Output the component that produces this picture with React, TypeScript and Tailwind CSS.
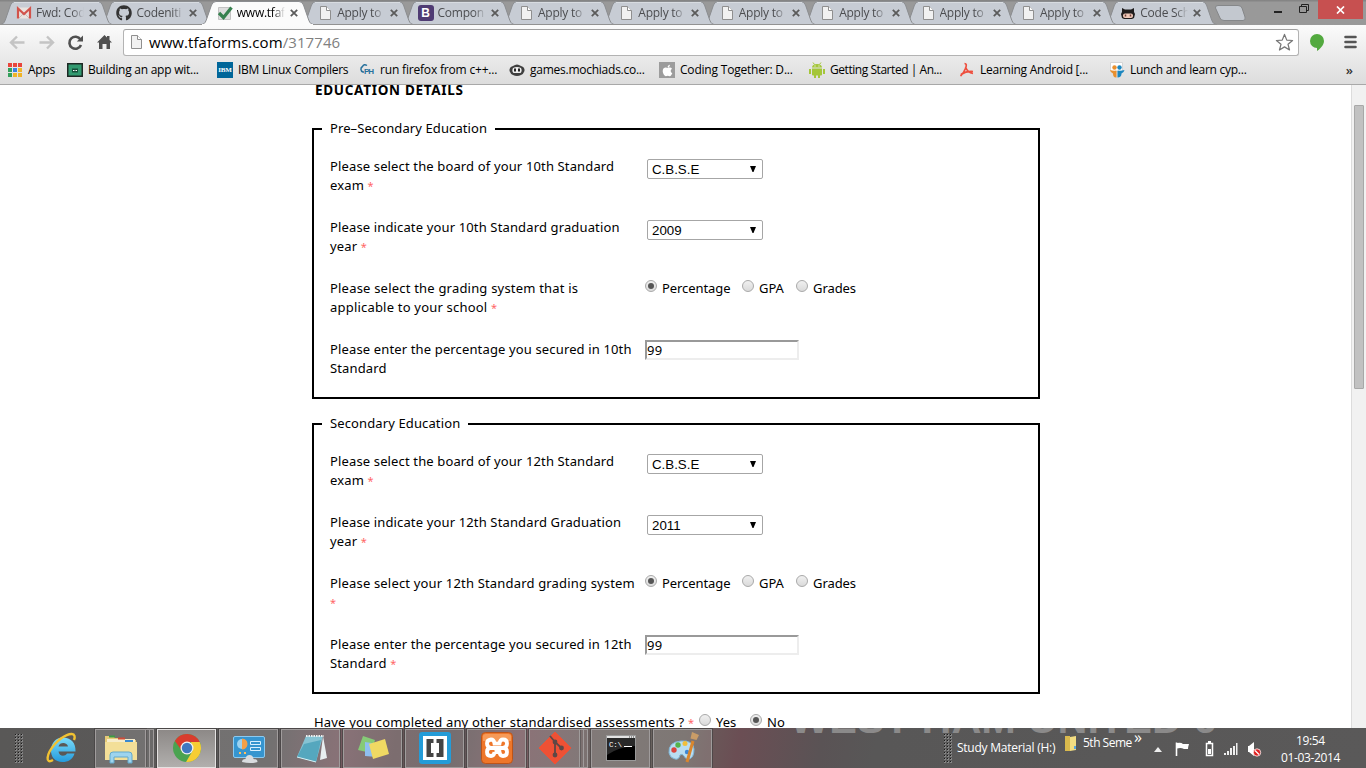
import React from "react";
import { FaGithub, FaApple } from "react-icons/fa";

type TabIcon = "gmail" | "github" | "check" | "page" | "bootstrap" | "octocat";

const tabs: { title: string; icon: TabIcon; active?: boolean }[] = [
  { title: "Fwd: Cod", icon: "gmail" },
  { title: "Codeniti", icon: "github" },
  { title: "www.tfaf", icon: "check", active: true },
  { title: "Apply to", icon: "page" },
  { title: "Compon", icon: "bootstrap" },
  { title: "Apply to", icon: "page" },
  { title: "Apply to", icon: "page" },
  { title: "Apply to", icon: "page" },
  { title: "Apply to", icon: "page" },
  { title: "Apply to", icon: "page" },
  { title: "Apply to", icon: "page" },
  { title: "Code Sch", icon: "octocat" },
];

function PageIcon() {
  return (
    <svg width="16" height="16" viewBox="0 0 16 16" className="shrink-0">
      <path d="M3.500 1.500h6l4 4v9h-10z" fill="#f1f1f1" stroke="#8f8f8f" />
      <path d="M9.500 1.500v4h4" fill="#fff" stroke="#8f8f8f" />
    </svg>
  );
}

function TabGlyph({ icon }: { icon: TabIcon }) {
  switch (icon) {
    case "gmail":
      return (
        <svg width="16" height="16" viewBox="0 0 16 16" className="shrink-0">
          <path d="M1 2.500h14v11H1z" fill="#e9e3df" />
          <path d="M3 13 8 8l5 5" fill="none" stroke="#c9bcb8" />
          <path d="M2 13.500V3.500l6 5.500 6-5.500v10" fill="none" stroke="#d2534b" strokeWidth="2.200" />
        </svg>
      );
    case "github":
      return <FaGithub className="size-4 shrink-0 text-[#333]" />;
    case "check":
      return (
        <svg width="16" height="16" viewBox="0 0 16 16" className="shrink-0">
          <path d="M1.500 2.500h12v12h-12z" fill="#dedede" stroke="#c2c2c2" />
          <path d="M2 8 6.500 12.500 14.500 2.500" fill="none" stroke="#37814f" strokeWidth="3.200" />
        </svg>
      );
    case "bootstrap":
      return (
        <span className="flex size-4 shrink-0 items-center justify-center rounded-[3px] bg-[#4f3b73] font-['Liberation_Sans',sans-serif] text-[12px] leading-none font-bold text-white">
          B
        </span>
      );
    case "octocat":
      return (
        <svg width="16" height="16" viewBox="0 0 16 16" className="shrink-0">
          <path d="M2 3l3 1.500h6L14 3v4l1 2-1 4-2 1H4l-2-1-1-4 1-2z" fill="#1f1c1c" />
          <rect x="3" y="8.500" width="10" height="4.500" rx="2" fill="#f0c9b8" />
          <path d="M5.500 9.500v2M10.500 9.500v2" stroke="#6b3d35" strokeWidth="1.500" />
        </svg>
      );
    default:
      return <PageIcon />;
  }
}

function Tab({ title, icon, active, order }: { title: string; icon: TabIcon; active?: boolean; order: number }) {
  return (
    <div className="relative h-[25px] w-[100.4px] shrink-0" style={{ zIndex: active ? 50 : 30 - order }}>
      <svg width="114" height="25" viewBox="0 0 114 25" className="absolute top-0 left-0">
        <path
          d="M1 24.500C4 24 5 21 6 18L10.500 5Q12 1.500 15 1.500H98Q101 1.500 102.500 5L107 18C108 21 109 24 112 24.500"
          fill={active ? "#fbfbfb" : "#c7ccd4"}
          stroke="#8b8d90"
        />
        {active ? <path d="M1 24.500H112" stroke="#fbfbfb" /> : <path d="M0 24.500H113" stroke="#929292" />}
        {!active && <path d="M14 2.500H99" stroke="#d8dce1" />}
      </svg>
      <div className="relative flex h-[25px] w-[102px] items-center pl-4">
        <TabGlyph icon={icon} />
        <span
          className={`ml-1 w-[48px] overflow-hidden [mask-image:linear-gradient(to_right,#000_75%,transparent)] whitespace-nowrap text-[12px] tracking-[-0.25px] ${
            active ? "text-black" : "text-[#4c4d50]"
          }`}
        >
          {title}
        </span>
        <svg width="8" height="8" viewBox="0 0 8 8" className="ml-[5px] shrink-0">
          <path d="M.8.8l6.400 6.400M7.200.8.8 7.200" stroke="#5b5b5b" strokeWidth="1.800" />
        </svg>
      </div>
    </div>
  );
}

function TabStrip() {
  return (
    <div className="flex h-[25px] bg-linear-to-b from-[#858585] from-[4%] to-[#999] to-[8%]">
      {tabs.map((t, i) => (
        <Tab key={i} order={i} {...t} />
      ))}
      <svg width="32" height="25" viewBox="0 0 32 25" className="ml-[9px] shrink-0">
        <path d="M4 5.500H24Q27 5.500 28 8L31 17Q32 20.500 29 20.500H10Q7 20.500 6 18L1.500 8Q1 5.500 4 5.500z" fill="#c3c8cf" stroke="#858789" />
      </svg>
      <div className="ml-auto flex pr-[3px]">
        <svg width="45" height="20" viewBox="0 0 45 20">
          <path d="M1 12h8" stroke="#222" strokeWidth="2" />
          <path d="M26.500 6.500h7v6h-7zM28.500 6V4.500h7v6H34" fill="none" stroke="#222" />
        </svg>
        <div className="flex h-[19px] w-[45px] items-center justify-center bg-[#c75050]">
          <svg width="9" height="8" viewBox="0 0 9 8">
            <path d="M1 .5l7 7M8 .5l-7 7" stroke="#fff" strokeWidth="1.700" />
          </svg>
        </div>
      </div>
    </div>
  );
}

function Toolbar() {
  return (
    <div className="flex h-[34px] items-center">
      <svg width="121" height="28" viewBox="0 0 121 28" className="shrink-0">
        <path d="M24.500 14.500H11M17 8.500l-6 6 6 6" fill="none" stroke="#c4c4c4" strokeWidth="2.400" />
        <path d="M39.500 14.500H53M47 8.500l6 6-6 6" fill="none" stroke="#c4c4c4" strokeWidth="2.400" />
        <path d="M80.500 11.500A6 6 0 1 0 81 17" fill="none" stroke="#505050" strokeWidth="2.600" />
        <path d="M83 7.500v6h-6.200z" fill="#505050" />
        <path d="M97 14.500 104.500 7l2.500 2.500V8h2.500v4l2.500 2.500h-2V21h-3.500v-5h-4v5H99v-6.500z" fill="#505050" />
      </svg>
      <div className="ml-[2px] flex h-[27px] w-[1176px] items-center rounded-[3px] border border-[#b3b3b3] border-t-[#a0a0a0] bg-white pr-1 pl-[4px]">
        <PageIcon />
        <span className="ml-[5px] text-[15px] tracking-[0.05px] whitespace-nowrap text-black">
          www.tfaforms.com<span className="tracking-[0.1px] text-[#808080]">/317746</span>
        </span>
        <svg width="19" height="19" viewBox="0 0 20 20" className="ml-auto">
          <path
            d="M10 1.500l2.400 6 6.100.4-4.800 4 1.600 6L10 14.600l-5.300 3.300 1.600-6-4.800-4 6.100-.4z"
            fill="#fff"
            stroke="#777"
            strokeWidth="1.300"
            strokeLinejoin="round"
          />
        </svg>
      </div>
      <svg width="16" height="19" viewBox="0 0 16 19" className="ml-[10px]">
        <path d="M8 1a7 7 0 0 1 7 7c0 4-4 8-7 10v-3A7 7 0 0 1 8 1z" fill="#53a93f" />
      </svg>
      <svg width="13" height="14" viewBox="0 0 13 14" className="ml-[19px]">
        <path d="M1.500 2h10M1.500 7h10M1.500 12h10" stroke="#555" strokeWidth="2.600" strokeLinecap="round" />
      </svg>
    </div>
  );
}

const appColors = ["#e8453c", "#e8453c", "#e8453c", "#34a05c", "#3b82e0", "#f0b428", "#34a05c", "#f0b428", "#f0b428"];

function Bookmark({ icon, children, width }: { icon: React.ReactNode; children: React.ReactNode; width: string }) {
  return (
    <div className={`flex shrink-0 items-center gap-[5px] ${width}`}>
      {icon}
      <span className="text-[12px] leading-[18px] tracking-[-0.25px] whitespace-nowrap text-black">{children}</span>
    </div>
  );
}

function BookmarksBar() {
  return (
    <div className="flex h-[26px] items-center border-b border-[#a8a8a8] pb-[3px] pl-[7px]">
      <Bookmark
        width="w-[60px]"
        icon={
          <div className="grid size-4 grid-cols-3 gap-px p-px">
            {appColors.map((c, i) => (
              <i key={i} className="size-[4px]" style={{ background: c }} />
            ))}
          </div>
        }
      >
        Apps
      </Bookmark>
      <Bookmark
        width="w-[150px]"
        icon={
          <svg width="16" height="16" viewBox="0 0 16 16" className="shrink-0">
            <rect x=".75" y="1.750" width="14.500" height="12.500" fill="#329a70" stroke="#1d2824" strokeWidth="1.500" />
            <path d="M5 6.500h6v4H5z" fill="#174f3a" />
            <path d="M6 8.500h1.500M8.500 8.500H10" stroke="#fff" />
          </svg>
        }
      >
        Building an app wit...
      </Bookmark>
      <Bookmark
        width="w-[142px]"
        icon={
          <div className="flex size-4 shrink-0 items-center justify-center bg-[#006699]">
            <span className="font-['Liberation_Serif'] text-[7px] leading-none font-bold tracking-[-0.2px] text-white">IBM</span>
          </div>
        }
      >
        IBM Linux Compilers
      </Bookmark>
      <Bookmark
        width="w-[150px]"
        icon={
          <svg width="16" height="16" viewBox="0 0 16 16" className="shrink-0">
            <path d="M5 10H4a3 3 0 0 1-.5-5.500Q5 1.500 8 3.500" fill="none" stroke="#27719c" strokeWidth="1.500" />
            <text x="5" y="12" fontSize="8" fontWeight="bold" fill="#27719c" fontFamily="Liberation Sans" textLength="10">PH</text>
          </svg>
        }
      >
        <span className="tracking-[-0.18px]">run firefox from c++...</span>
      </Bookmark>
      <Bookmark
        width="w-[150px]"
        icon={
          <svg width="16" height="16" viewBox="0 0 16 16" className="shrink-0">
            <path d="M4 4Q8 1 12 4q4 1 3.500 5-1 3-3.500 4-4 2-8 0Q1.500 12 .5 9 0 5 4 4z" fill="#3f3f3f" />
            <path d="M4 6q4-2 8 0 1.500 3-.5 5H4.500Q2.500 9 4 6z" fill="#eee" />
            <path d="M6 6.500v3M10 6.500v3" stroke="#222" strokeWidth="2" />
          </svg>
        }
      >
        games.mochiads.co...
      </Bookmark>
      <Bookmark
        width="w-[150px]"
        icon={
          <div className="flex size-4 shrink-0 items-center justify-center bg-[#9c9c9c]">
            <FaApple className="size-[13px] text-white" />
          </div>
        }
      >
        <span className="tracking-[-0.2px]">Coding Together: D...</span>
      </Bookmark>
      <Bookmark
        width="w-[150px]"
        icon={
          <svg width="16" height="16" viewBox="0 0 16 16" className="shrink-0">
            <path d="M3 5.500Q3.200 2 8 2t5 3.500zM3 6.500h10v6q0 1-1 1H4q-1 0-1-1zM0 7h2v5H0zM14 7h2v5h-2zM5 13h2v3H5zM9 13h2v3H9z" fill="#a4c639" />
            <path d="M4 .5l1.500 2M12 .5l-1.500 2" stroke="#a4c639" />
            <path d="M5.500 4h1M9.500 4h1" stroke="#fff" />
          </svg>
        }
      >
        <span className="tracking-[-0.45px]">Getting Started | An...</span>
      </Bookmark>
      <Bookmark
        width="w-[150px]"
        icon={
          <svg width="16" height="16" viewBox="0 0 16 16" className="shrink-0">
            <path d="M5.500 1.500q3 0 1 5-2 5-5 7.500M6.500 5q2 5.500 7.500 6.500M2 12.500Q7 9 14 9.500" fill="none" stroke="#ee4f3e" strokeWidth="1.700" />
          </svg>
        }
      >
        Learning Android [...
      </Bookmark>
      <Bookmark
        width="w-[150px]"
        icon={
          <svg width="16" height="16" viewBox="0 0 16 16" className="shrink-0">
            <path d="M1.500.500h12v9h-12z" fill="#fff" stroke="#d5d5d5" />
            <circle cx="5.500" cy="5.500" r="2.200" fill="#e9902f" />
            <circle cx="10.500" cy="5.500" r="2.200" fill="#1b86bf" />
            <path d="M1 8q3 1 6.500.500v7Q4 16 4 11.500 1.500 10.500 1 8z" fill="#e9902f" />
            <path d="M15.500 8q-3.500 1-7 .5v7q4 0 4-4 2.500-1 3-3.500z" fill="#1b86bf" />
          </svg>
        }
      >
        Lunch and learn cyp...
      </Bookmark>
      <span className="ml-auto pr-[13px] text-[13px] leading-none font-semibold text-[#333]">»</span>
    </div>
  );
}

function Req() {
  return <span className="text-[11px] text-[#f66]">*</span>;
}

function Row({ label, children }: { label: React.ReactNode; children: React.ReactNode }) {
  return (
    <div className="flex h-[61px] items-start">
      <div className="w-[315px] shrink-0 leading-[19px] tracking-[0.14px] whitespace-nowrap">{label}</div>
      {children}
    </div>
  );
}

function SelectBox({ value }: { value: string }) {
  return (
    <div className="mt-[2px] ml-[2px] flex h-5 w-[116px] items-center justify-between rounded-[2px] border border-[#a6a6a6] bg-white pr-[5px] pl-1 font-['Liberation_Sans',Arial,sans-serif] text-[13.3px]">
      <span className="pt-px">{value}</span>
      <svg width="8" height="6" viewBox="0 0 8 6">
        <path d="M1 0h6L4.500 6h-1z" fill="#000" />
      </svg>
    </div>
  );
}

function Radio({ on }: { on?: boolean }) {
  return (
    <span className="flex size-3 shrink-0 items-center justify-center rounded-full border border-[#a9a9a9] bg-linear-to-b from-[#f0f0f0] to-[#dadada]">
      {on && <span className="size-[6px] rounded-full bg-[#555]" />}
    </span>
  );
}

function Grading() {
  return (
    <div className="flex leading-[19px] tracking-[-0.08px] whitespace-nowrap [&_i]:pt-px">
      <span className="flex w-[97px] gap-[5px]">
        <i><Radio on /></i>Percentage
      </span>
      <span className="flex w-[54px] gap-[5px]">
        <i><Radio /></i>GPA
      </span>
      <span className="flex gap-[5px]">
        <i><Radio /></i>Grades
      </span>
    </div>
  );
}

function Score({ value }: { value: string }) {
  return (
    <div className="flex h-5 w-[154px] items-center border-2 border-[#ededed] border-t-[#999] border-l-[#999] bg-white pt-px tracking-[0.3px]">
      {value}
    </div>
  );
}

function Page() {
  return (
    <main className="h-[643px] flex-1 overflow-hidden bg-white pl-[312px] font-['Noto_Sans',sans-serif] text-[13px] text-black">
      <h1 className="pl-[3px] text-[13.500px] leading-[11px] font-bold tracking-[0.7px]">EDUCATION DETAILS</h1>
      <fieldset className="mt-[23px] h-[280px] w-[728px] border-2 border-black px-2">
        <legend className="h-5 px-2 leading-[19px] tracking-[0.1px]">Pre–Secondary Education</legend>
        <div className="px-2 pt-[18px]">
          <Row label={<>Please select the board of your 10th Standard<br />exam <Req /></>}>
            <SelectBox value="C.B.S.E" />
          </Row>
          <Row label={<>Please indicate your 10th Standard graduation<br />year <Req /></>}>
            <SelectBox value="2009" />
          </Row>
          <Row label={<><span className="tracking-[0.2px]">Please select the grading system that is<br />applicable to your school</span> <Req /></>}>
            <Grading />
          </Row>
          <Row label={<>Please enter the percentage you secured in 10th<br />Standard</>}>
            <Score value="99" />
          </Row>
        </div>
      </fieldset>
      <fieldset className="mt-[15px] h-[280px] w-[728px] border-2 border-black px-2">
        <legend className="h-5 px-2 leading-[19px] tracking-[0.12px]">Secondary Education</legend>
        <div className="px-2 pt-[18px]">
          <Row label={<>Please select the board of your 12th Standard<br />exam <Req /></>}>
            <SelectBox value="C.B.S.E" />
          </Row>
          <Row label={<>Please indicate your 12th Standard Graduation<br />year <Req /></>}>
            <SelectBox value="2011" />
          </Row>
          <Row label={<><span className="tracking-[0.17px]">Please select your 12th Standard grading system</span><br /><Req /></>}>
            <Grading />
          </Row>
          <Row label={<>Please enter the percentage you secured in 12th<br />Standard <Req /></>}>
            <Score value="99" />
          </Row>
        </div>
      </fieldset>
      <div className="mt-[19px] flex pl-[2px] leading-[19px] whitespace-nowrap">
        <span className="w-[385px] tracking-[0.18px]">Have you completed any other standardised assessments ? <Req /></span>
        <span className="flex w-[51px] gap-[5px]"><i className="pt-px"><Radio /></i>Yes</span>
        <span className="flex gap-[5px]"><i className="pt-px"><Radio on /></i>No</span>
      </div>
    </main>
  );
}

function TaskButton({ children, active, stacked }: { children: React.ReactNode; active?: boolean; stacked?: boolean }) {
  return (
    <div className="flex h-[39px] w-[62px] shrink-0">
      <div
        className={`flex items-center justify-center border outline outline-[#454242]/70 ${stacked ? "w-[51px]" : "w-[59px]"} ${
          active ? "border-[#e4e2e1] bg-linear-to-b from-[#8d8987] to-[#b1afad]" : "border-[#a09c9c] bg-white/15"
        }`}
      >
        {children}
      </div>
      {stacked && (
        <>
          <div className="w-1 border-y border-r border-[#a09c9c] bg-white/10" />
          <div className="w-1 border-y border-r border-[#a09c9c] bg-white/10" />
        </>
      )}
    </div>
  );
}

function Grip() {
  return (
    <div className="grid grid-cols-3 gap-[1px]">
      {Array.from({ length: 30 }, (_, i) => (
        <i key={i} className="size-[2px] border-r border-b border-[#858585] bg-[#1c1c1c]" />
      ))}
    </div>
  );
}

function Taskbar() {
  return (
    <footer className="relative flex h-10 items-center overflow-hidden bg-[linear-gradient(100deg,#595857_0%,#5b5959_20%,#745a60_25%,#665456_29%,#5e5557_33%,#785a60_38%,#6a6361_44%,#68605c_50%,#6b4e54_54%,#5a5355_60%,#585757_64%,#5a5959_100%)]">
      <span className="absolute top-[-30px] left-[790px] font-['Liberation_Sans',sans-serif] text-[41.5px] leading-[42px] font-bold whitespace-nowrap text-[#8b8a8a]">
        WEST HAM UNITED 6
      </span>
      <div className="ml-[15px]"><Grip /></div>
      <svg width="34" height="34" viewBox="0 0 34 34" className="ml-[21px] shrink-0">
        <defs>
          <linearGradient id="ie" x1="0" y1="0" x2="0" y2="1">
            <stop offset="0" stopColor="#7bdcfb" />
            <stop offset="1" stopColor="#249bdd" />
          </linearGradient>
        </defs>
        <path d="M18.500 6.500C27 6.500 32 12 31.500 20.500H14.500c.5 5 6.500 5.500 8.500 2h7.500C29 28.500 24 31 18.500 31 11 31 6.500 26 7 18.500 7.500 11.500 12 6.500 18.500 6.500zM14.500 15.500h9.500c-.5-4.500-8.500-5-9.500 0z" fill="url(#ie)" />
        <path d="M9 29C1 34 2 23 11 13 18 5 29 0 30.500 5q.5 1.500-.5 4" fill="none" stroke="#f1c232" strokeWidth="2.400" />
      </svg>
      <div className="ml-[17px] flex">
        <TaskButton stacked>
          <svg width="34" height="34" viewBox="0 0 34 34">
            <path d="M1 5h8l2 2h8l1 2h12v20H1z" fill="#e5ca76" />
            <path d="M3 8h28v4H3z" fill="#f7edcb" />
            <path d="M1 11h32v18H1z" fill="#f3df98" />
            <path d="M5 4.500h6v2H5z" fill="#3d9b45" /><path d="M14 6.500h7v2h-7z" fill="#cf4c38" /><path d="M21 9h8v2h-8z" fill="#3a8ad0" />
            <path d="M6 32V24q0-3 3-3h16q3 0 3 3v8h-4v-6H10v6z" fill="#9ed4ee" stroke="#62a9cd" />
          </svg>
        </TaskButton>
        <TaskButton active>
          <svg width="30" height="30" viewBox="0 0 30 30">
            <circle cx="15" cy="15" r="14" fill="#4aa350" />
            <path d="M2.900 8A14 14 0 0 1 27.700 9L15 9l-5 9z" fill="#d93c2e" />
            <path d="M27.700 9A14 14 0 0 1 14 29l6.500-11L19 9z" fill="#f6cd34" />
            <circle cx="15" cy="15" r="6.500" fill="#f2f2f2" />
            <circle cx="15" cy="15" r="5.200" fill="#3f78c2" />
          </svg>
        </TaskButton>
        <TaskButton>
          <svg width="34" height="32" viewBox="0 0 34 32">
            <rect x="1.500" y="4.500" width="31" height="21" rx="1.500" fill="#3695cf" stroke="#8ccaf0" />
            <circle cx="10" cy="12" r="5" fill="#9cd2f0" /><path d="M10 12V6.500A5.500 5.500 0 0 1 10 17.500z" fill="#f3a047" />
            <path d="M18.500 9.500h10v3h-10zM18.500 15.500h10v3h-10z" fill="none" stroke="#d8f0ff" />
            <path d="M7 21h2M12 21h2" stroke="#ffc060" strokeWidth="2" />
            <path d="M10 30q0-3 3.500-3 .5-4 4-4t4 4q4 0 4 3-7 2-15.500 0z" fill="#d9dcdf" />
          </svg>
        </TaskButton>
        <TaskButton>
          <svg width="34" height="34" viewBox="0 0 34 34">
            <path d="M29 5l4 22-7 2z" fill="#e8eef0" />
            <path d="M12 5h17l-7 26L3 26z" fill="#86c3d3" /><path d="M10 13 27 9l-5 22L3 26z" fill="#55a7be" />
            <path d="M12 5h18" stroke="#eee" strokeWidth="2" strokeDasharray="1.500 1" />
            <path d="M3 26l19 5" stroke="#d7f1f5" />
          </svg>
        </TaskButton>
        <TaskButton>
          <svg width="34" height="30" viewBox="0 0 34 30">
            <path d="M7 3l12 4-4 13L2 17z" fill="#86ca77" />
            <path d="M9 9l13 2-1 13-12-1z" fill="#8fbff0" />
            <path d="M13 11l16-5 4 15-16 5z" fill="#f0d963" />
          </svg>
        </TaskButton>
        <TaskButton>
          <svg width="32" height="32" viewBox="0 0 32 32">
            <rect width="32" height="32" rx="3" fill="#249cd8" /><rect x="4" y="4" width="24" height="24" fill="#fff" />
            <path d="M14.500 7H7.500v18h7v-4H12V11h2.500zM17.500 7h7v18h-7v-4H20V11h-2.500z" fill="#444" />
          </svg>
        </TaskButton>
        <TaskButton>
          <svg width="32" height="32" viewBox="0 0 32 32">
            <rect x=".5" y=".5" width="31" height="31" rx="4" fill="#ee762a" stroke="#bd5418" />
            <path d="M2 4q0-2 3-2h22q3 0 3 2v5H2z" fill="#f79a58" />
            <path d="M13 16H9.500Q6 16 6 20t4 4q3 0 3.500-4M13 16h6M13 16H10Q6 15 6 11.500T10 7.500q3 0 3.500 4h5q.5-4 3.500-4 4 0 4 4T22 16h-3M22.500 16Q26 16 26 20t-4 4q-3 0-3.500-4h-5" fill="none" stroke="#fff" strokeWidth="3.800" />
          </svg>
        </TaskButton>
        <TaskButton stacked>
          <svg width="34" height="34" viewBox="0 0 34 34">
            <path d="M17 1 33 17 17 33 1 17z" fill="#ee5135" stroke="#ee5135" strokeLinejoin="round" />
            <path d="M12 5l5 6v13M17 11l6.500 6" fill="none" stroke="#5e4745" strokeWidth="1.800" />
            <circle cx="17" cy="11" r="2.400" fill="#5e4745" /><circle cx="17" cy="24" r="2.400" fill="#5e4745" /><circle cx="23.500" cy="17" r="2.400" fill="#5e4745" />
          </svg>
        </TaskButton>
        <TaskButton>
          <svg width="30" height="26" viewBox="0 0 30 26">
            <rect x=".5" y=".5" width="29" height="25" fill="#000" stroke="#999" /><path d="M1 2h28" stroke="#e3e3e3" strokeWidth="2" />
            <path d="M23 2h1M25 2h1M27 2h1" stroke="#444" />
            <path d="M1 3h28v8Q12 12 1 20z" fill="#292929" />
            <text x="3" y="12" fontSize="7.500" fill="#fff" fontFamily="Liberation Mono" textLength="13">C:\</text>
            <path d="M18 11.500h8" stroke="#fff" />
          </svg>
        </TaskButton>
        <TaskButton>
          <svg width="32" height="32" viewBox="0 0 32 32">
            <path d="M2 21Q1 10 14 9q12-1 13 8 0 9-5 10-4 0-5-3-2-3-4-1-1 5-5 4-5-1-6-6z" fill="#b9ddf1" stroke="#7fb6d8" />
            <circle cx="7" cy="18" r="2.700" fill="#d9453d" /><circle cx="11" cy="13" r="2.700" fill="#55b34b" /><circle cx="18" cy="11.500" r="2.500" fill="#f2bf3a" /><circle cx="20" cy="20" r="2.200" fill="#3d87d4" />
            <path d="M20 30 26 9" stroke="#d9862e" strokeWidth="3" /><path d="M23.500 6.500 25 0l7 3-2.500 5z" fill="#c99c67" />
          </svg>
        </TaskButton>
      </div>
      <div className="ml-[229px]"><Grip /></div>
      <div className="relative ml-[5px] flex h-full flex-1 text-[12px] tracking-[-0.25px] text-white">
        <span className="w-[107px] shrink-0 pt-[11px] leading-[18px] whitespace-nowrap">Study Material (H:)</span>
        <svg width="13" height="17" viewBox="0 0 13 17" className="mt-[7px] shrink-0">
          <path d="M1 1h5v15H1z" fill="#d9b94d" /><path d="M6 2l6-1v14l-6 1z" fill="#f2dd82" /><path d="M11 11v3" stroke="#5aa6de" strokeWidth="2" />
        </svg>
        <span className="mt-[6px] ml-[6px] w-[51px] shrink-0 leading-[18px] tracking-[-0.5px] whitespace-nowrap">5th Seme</span>
        <span className="w-[9px] shrink-0 text-[16px] leading-[18px]">»</span>
        <svg width="110" height="40" viewBox="0 0 110 40" className="ml-[10px] shrink-0">
          <path d="M1 24 5 19l4 5z" fill="#eee" />
          <path d="M23.500 14.500V28" stroke="#fff" strokeWidth="1.600" /><path d="M24 15q4-1 6 1h6q-1 3-1 5h-4q-3-1.500-7-.5z" fill="#fff" />
          <path d="M53.500 15.500h6v12h-6z" fill="none" stroke="#fff" strokeWidth="1.500" /><path d="M55 13h3v2h-3zM55 21h3v5h-3z" fill="#fff" />
          <path d="M71 25h2v2h-2zM74 23h2v4h-2zM77 20h2v7h-2zM80 18h2v9h-2zM83 15h1.500v12H83z" fill="#eee" />
          <path d="M95 18h1l5-4v14l-5-4h-1z" fill="#fff" />
          <circle cx="104" cy="24.500" r="3.700" fill="#df2020" stroke="#fff" strokeWidth=".8" /><path d="M102 22.500l4 4" stroke="#fff" strokeWidth="1.300" />
        </svg>
      </div>
      <div className="absolute top-[4px] right-[26px] text-center text-[12px] leading-[17px] tracking-[-0.35px] text-white">
        <span>19:54</span>
        <br />
        01-03-2014
      </div>
    </footer>
  );
}

export default function App() {
  return (
    <div className="h-[768px] w-[1366px] overflow-hidden bg-white font-['Open_Sans','Noto_Sans',sans-serif]">
      <TabStrip />
      <div className="bg-linear-to-b from-[#fbfbfb] to-[#dcdcdc]">
        <Toolbar />
        <BookmarksBar />
      </div>
      <div className="flex">
        <Page />
        <div className="h-[643px] w-[15px] border-l border-[#dcdcdc] bg-[#f1f1f1] pt-5 pl-[2px]">
          <div className="h-[284px] w-[10px] rounded-[1px] border border-[#a8a8a8] bg-[#c1c1c1]" />
        </div>
      </div>
      <Taskbar />
    </div>
  );
}
